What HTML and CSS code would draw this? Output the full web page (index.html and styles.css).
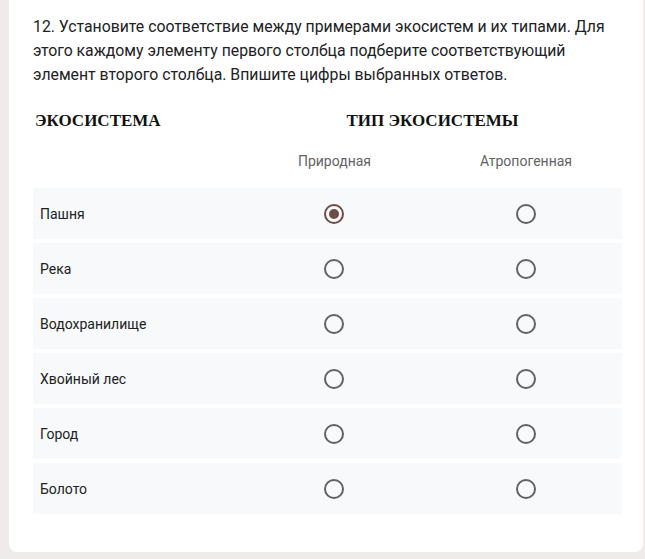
FILE: index.html
```html
<!DOCTYPE html>
<html lang="ru">
<head>
<meta charset="utf-8">
<link rel="stylesheet" href="styles.css">
</head>
<body>
<div class="card">
  <p class="question">12. Установите соответствие между примерами экосистем и их типами. Для этого каждому элементу первого столбца подберите соответствующий элемент второго столбца. Впишите цифры выбранных ответов.</p>
  <div class="heads">
    <div class="h1">ЭКОСИСТЕМА</div>
    <div class="h2">ТИП ЭКОСИСТЕМЫ</div>
  </div>
  <div class="grid">
    <div class="colhead">
      <span></span><span>Природная</span><span>Атропогенная</span>
    </div>
    <div class="row"><span class="label">Пашня</span><span class="cell"><span class="radio checked"></span></span><span class="cell"><span class="radio"></span></span></div>
    <div class="row"><span class="label">Река</span><span class="cell"><span class="radio"></span></span><span class="cell"><span class="radio"></span></span></div>
    <div class="row"><span class="label">Водохранилище</span><span class="cell"><span class="radio"></span></span><span class="cell"><span class="radio"></span></span></div>
    <div class="row"><span class="label">Хвойный лес</span><span class="cell"><span class="radio"></span></span><span class="cell"><span class="radio"></span></span></div>
    <div class="row"><span class="label">Город</span><span class="cell"><span class="radio"></span></span><span class="cell"><span class="radio"></span></span></div>
    <div class="row"><span class="label">Болото</span><span class="cell"><span class="radio"></span></span><span class="cell"><span class="radio"></span></span></div>
  </div>
</div>
</body>
</html>
```
FILE: styles.css
```css
html, body {
  margin: 0;
  padding: 0;
  background: #eeebea;
}
body {
  width: 645px;
  height: 559px;
  overflow: hidden;
}
.card {
  margin-left: 9px;
  width: 634px;
  height: 552px;
  box-sizing: border-box;
  background: #ffffff;
  border-radius: 0 0 8px 8px;
  padding: 15px 21px 0 24px;
  font-family: Roboto, "Liberation Sans", sans-serif;
}
.question {
  margin: 0;
  font-size: 15.8px;
  line-height: 24px;
  color: #202124;
}
.heads {
  display: grid;
  grid-template-columns: 204px 1fr;
  margin-top: 24px;
  font-family: "Liberation Serif", "Times New Roman", serif;
  font-weight: bold;
  font-size: 17px;
  line-height: 20px;
  color: #111;
  padding-left: 2px;
}
.h2 {
  text-align: center;
  padding-left: 4px;
}
.grid {
  margin-top: 20px;
  display: flex;
  flex-direction: column;
  gap: 4px;
}
.colhead, .row {
  display: grid;
  grid-template-columns: 204px 193px 1fr;
  align-items: center;
}
.colhead {
  font-size: 14px;
  line-height: 20px;
  color: #5f6368;
  text-align: center;
  margin-bottom: 13px;
}
.colhead span:nth-child(2) {
  padding-left: 2px;
}
.row {
  height: 51px;
  background: #f8f9fa;
}
.label {
  padding-left: 7px;
  font-size: 14px;
  color: #202124;
}
.cell {
  display: flex;
  justify-content: center;
}
.radio {
  width: 20px;
  height: 20px;
  box-sizing: border-box;
  border: 2px solid #5f6368;
  border-radius: 50%;
  position: relative;
}
.radio.checked {
  border-color: #6d4c47;
}
.radio.checked::after {
  content: "";
  position: absolute;
  left: 3px;
  top: 3px;
  width: 10px;
  height: 10px;
  border-radius: 50%;
  background: #6d4c47;
}
```
